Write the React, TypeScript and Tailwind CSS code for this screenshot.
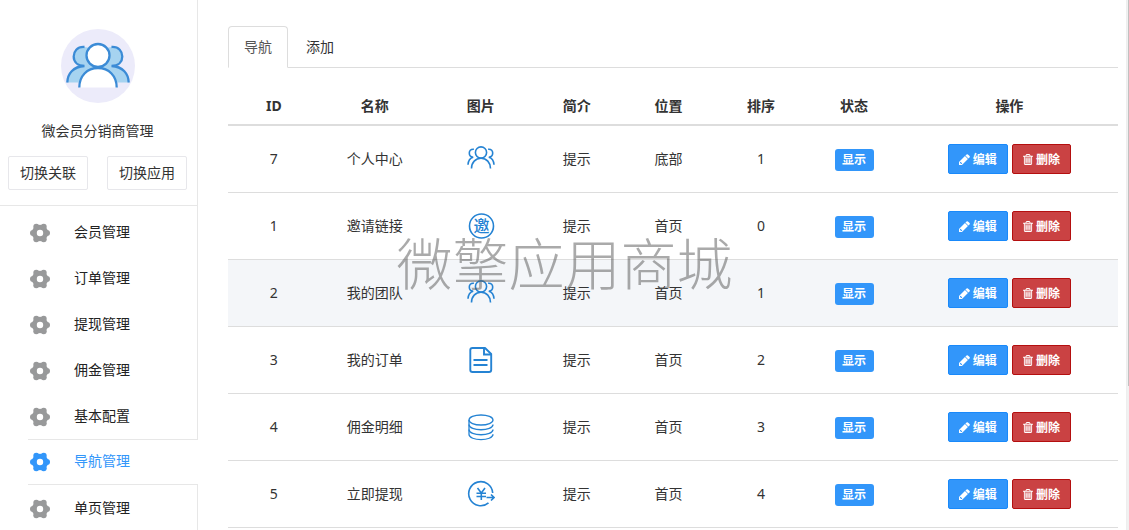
import React from "react";

type IconName = "people" | "invite" | "order" | "coins" | "withdraw";

interface Row {
  id: number;
  name: string;
  icon: IconName;
  place: string;
  sort: number;
}

const rows: Row[] = [
  { id: 7, name: "个人中心", icon: "people", place: "底部", sort: 1 },
  { id: 1, name: "邀请链接", icon: "invite", place: "首页", sort: 0 },
  { id: 2, name: "我的团队", icon: "people", place: "首页", sort: 1 },
  { id: 3, name: "我的订单", icon: "order", place: "首页", sort: 2 },
  { id: 4, name: "佣金明细", icon: "coins", place: "首页", sort: 3 },
  { id: 5, name: "立即提现", icon: "withdraw", place: "首页", sort: 4 },
];

const menu = ["会员管理", "订单管理", "提现管理", "佣金管理", "基本配置", "导航管理", "单页管理"];
const activeItem = "导航管理";

function GearIcon() {
  return (
    <svg viewBox="0 0 20 20" className="h-5 w-5 shrink-0" fill="currentColor" aria-hidden="true">
      <circle cx="10" cy="10" r="5.700" fill="none" stroke="currentColor" strokeWidth="5" />
      <circle cx="3" cy="10" r="3" />
      <circle cx="17" cy="10" r="3" />
      <circle cx="6.300" cy="3.700" r="3" />
      <circle cx="13.700" cy="3.700" r="3" />
      <circle cx="6.300" cy="16.300" r="3" />
      <circle cx="13.700" cy="16.300" r="3" />
    </svg>
  );
}

function Logo() {
  return (
    <svg viewBox="0 0 74 74" className="h-[74px] w-[74px]" aria-hidden="true">
      <circle cx="37" cy="37" r="37" fill="#ecebfa" />
      <g stroke="#3b8bd6" strokeWidth="2.3" fill="none">
        <g fill="#a6d3f0" stroke="none">
          <path d="M23 18C16 17 12.500 23 12.500 27.500C12.500 32 15 36 21 37C11 38.500 6.500 46 6 53.500H20L37 40V20Z" />
          <path d="M51 18C58 17 61.500 23 61.500 27.500C61.500 32 59 36 53 37C63 38.500 67.500 46 68 53.500H54L37 40V20Z" />
        </g>
        <path d="M23.500 18C16 17.500 12.700 22.500 12.700 27.500C12.700 32.500 16 36.800 23.500 37C12 37.500 6.500 45 6.300 53.500" />
        <path d="M50.500 18C58 17.500 61.300 22.500 61.300 27.500C61.300 32.500 58 36.800 50.500 37C62 37.500 67.500 45 67.700 53.500" />
        <path d="M18.300 58.500C18.300 47 26 39 37 39S55.700 47 55.700 58.500" fill="#fff" />
        <circle cx="37" cy="26.500" r="11.500" fill="#fff" />
      </g>
    </svg>
  );
}

function PencilIcon() {
  return (
    <svg viewBox="0 0 1536 1536" className="h-[11px] w-[11px]" fill="currentColor" aria-hidden="true">
      <path d="M363 1408l91-91-235-235-91 91v107h128v128h107zM832 288l416 416-832 832H0v-416zM1515 384q0 53-37 90l-166 166-416-416 166-165q36-38 90-38 53 0 91 38l235 234q37 39 37 91z" />
    </svg>
  );
}

function TrashIcon() {
  return (
    <svg viewBox="0 0 1408 1536" className="h-[11px] w-2.5" fill="currentColor" aria-hidden="true">
      <path fillOpacity="0.4" d="M256 384H1152V1408H256Z" />
      <path d="M512 608v576q0 14-9 23t-23 9h-64q-14 0-23-9t-9-23V608q0-14 9-23t23-9h64q14 0 23 9t9 23zM768 608v576q0 14-9 23t-23 9h-64q-14 0-23-9t-9-23V608q0-14 9-23t23-9h64q14 0 23 9t9 23zM1024 608v576q0 14-9 23t-23 9h-64q-14 0-23-9t-9-23V608q0-14 9-23t23-9h64q14 0 23 9t9 23zM1152 1332V384H256v948q0 22 7 40.500t14.500 27 10.500 8.500h832q3 0 10.500-8.500t14.500-27 7-40.500zM480 256h448l-48-117q-7-9-17-11H546q-10 2-17 11zM1408 288v64q0 14-9 23t-23 9h-96v948q0 83-47 143.500t-113 60.500H288q-66 0-113-58.500T128 1336V384H32q-14 0-23-9t-9-23v-64q0-14 9-23t23-9h309l70-167q15-37 54-63t79-26h320q40 0 79 26t54 63l70 167h309q14 0 23 9t9 23z" />
    </svg>
  );
}

function RowIcon({ name }: { name: IconName }) {
  return (
    <svg
      viewBox="0 0 28 28"
      className="mx-auto block h-7 w-7 text-[#2583d3]"
      fill="none"
      stroke="currentColor"
      strokeWidth="1.6"
      aria-hidden="true"
    >
      {name === "people" && (
        <>
          <circle cx="14" cy="7.500" r="5.600" />
          <path d="M4.500 23.500C4.500 17.500 8.500 13.300 14 13.300S23.500 17.500 23.500 23.500" />
          <path d="M6.900 4.300C3.500 4 2.300 6 2.300 8S3.500 12 6.200 12.200C3 13 1.200 16 1 19.800" />
          <path d="M21.100 4.300C24.500 4 25.700 6 25.700 8S24.500 12 21.800 12.200C25 13 26.800 16 27 19.800" />
        </>
      )}
      {name === "invite" && (
        <>
          <circle cx="14.500" cy="14" r="12" />
          <text x="14.500" y="20" fontSize="16" fontWeight="500" textAnchor="middle" fill="currentColor" stroke="none">
            邀
          </text>
        </>
      )}
      {name === "order" && (
        <g strokeWidth="1.900">
          <path d="M18 2H5.500Q3.300 2 3.300 4V24Q3.300 26 5.500 26H22Q24.200 26 24.200 24V8Z" strokeLinejoin="round" />
          <path d="M17 2V8.500H24" />
          <path d="M6.500 14H20.500M6.500 19H20.500" />
        </g>
      )}
      {name === "coins" && (
        <g strokeWidth="1.300">
          <ellipse cx="14" cy="7" rx="12" ry="5" />
          <path d="M2 7V21.500" />
          <path d="M2 11.500C2 18.500 26 18.500 26 11.500" />
          <path d="M2 16.500C2 23.500 26 23.500 26 16.500" />
          <path d="M2 21.300C2 28.300 26 28.300 26 21.300" />
        </g>
      )}
      {name === "withdraw" && (
        <>
          <path d="M25.700 13A12 12 0 1 0 21.500 22.800" />
          <path d="M10.500 8L14.300 13L18 8M14.300 13V20M9.500 13.200H19M9.500 16.500H19" />
          <path d="M19.500 17.500H27M24 14.500L27 17.500L24 20.500" strokeWidth="1.700" />
        </>
      )}
    </svg>
  );
}

function Sidebar() {
  return (
    <aside className="flex w-[198px] shrink-0 flex-col">
      <div className="border-r border-b border-[#e7e7e7] px-2 pt-[29px] pb-[15px]">
        <div className="flex flex-col items-center gap-[17px] pr-0.5">
          <Logo />
          <h1 className="leading-[22px]">微会员分销商管理</h1>
        </div>
        <div className="mt-3.5 flex justify-between pr-0.5">
          {["切换关联", "切换应用"].map((label) => (
            <button key={label} type="button" className="h-[34px] w-20 rounded-xs border border-[#e7e7eb]">
              {label}
            </button>
          ))}
        </div>
      </div>
      <nav className="flex grow flex-col">
        <div className="h-[3px] border-r border-[#e7e7e7]" />
        {menu.map((label) => {
          const active = label === activeItem;
          return (
            <div key={label} className={active ? "pl-7" : "border-r border-[#e7e7e7] pl-7"}>
              <a
                href="#"
                aria-current={active ? "page" : undefined}
                className={
                  active
                    ? "flex h-[46px] items-center gap-6 border-y border-[#e7e7e7] pb-[3px] pl-0.5 text-[#3296fa]"
                    : "flex h-[46px] items-center gap-6 pb-px pl-0.5 text-[#222]"
                }
              >
                <span className={active ? "mt-0.5" : "mt-0.5 text-[#98999a]"}>
                  <GearIcon />
                </span>
                <span>{label}</span>
              </a>
            </div>
          );
        })}
        <div className="grow border-r border-[#e7e7e7]" />
      </nav>
    </aside>
  );
}

function NavTable() {
  const heads = ["ID", "名称", "图片", "简介", "位置", "排序", "状态", "操作"];
  return (
    <table className="w-full table-fixed border-collapse text-center">
      <colgroup>
        <col className="w-[10.3%]" />
        <col className="w-[12.4%]" />
        <col className="w-[11.4%]" />
        <col className="w-[10.2%]" />
        <col className="w-[10.4%]" />
        <col className="w-[10.4%]" />
        <col className="w-[10.5%]" />
        <col />
      </colgroup>
      <thead>
        <tr className="h-[39px] border-b-2 border-[#ddd]">
          {heads.map((head) => (
            <th key={head} scope="col" className="pt-0.5 font-bold">
              {head}
            </th>
          ))}
        </tr>
      </thead>
      <tbody>
        {rows.map((row) => (
          <tr
            key={row.id}
            className={row.id === 2 ? "h-[67px] border-b border-[#ddd] bg-[#f4f6f9]" : "h-[67px] border-b border-[#ddd]"}
          >
            <td>{row.id}</td>
            <td>{row.name}</td>
            <td>
              <RowIcon name={row.icon} />
            </td>
            <td>提示</td>
            <td>{row.place}</td>
            <td>{row.sort}</td>
            <td className="pt-0.5">
              <span className="inline-block h-[22px] w-[39px] rounded-[3px] bg-[#3296fa] text-xs leading-[22px] font-bold text-white">
                显示
              </span>
            </td>
            <td>
              <div className="flex justify-center gap-1 text-xs font-bold text-white">
                <button
                  type="button"
                  className="flex h-[30px] items-center gap-[3px] rounded-xs border border-[#1989fa] bg-[#3296fa] px-2.5 pt-0.5"
                >
                  <PencilIcon />
                  编辑
                </button>
                <button
                  type="button"
                  className="flex h-[30px] items-center gap-[3px] rounded-xs border border-[#b40f0f] bg-[#ca4243] px-2.5 pt-0.5"
                >
                  <TrashIcon />
                  删除
                </button>
              </div>
            </td>
          </tr>
        ))}
      </tbody>
    </table>
  );
}

export default function App() {
  return (
    <div className="relative flex min-h-screen bg-white font-['Noto_Sans','Noto_Sans_CJK_SC',sans-serif] text-sm text-[#333]">
      <Sidebar />
      <main className="min-w-0 grow pt-[26px] pr-2 pl-[30px]">
        <div role="tablist" className="flex border-b border-[#ddd]">
          <button
            type="button"
            role="tab"
            aria-selected="true"
            className="-mb-px h-[42px] rounded-t border border-[#ddd] border-b-white bg-white px-[15px] text-[#555]"
          >
            导航
          </button>
          <button type="button" role="tab" aria-selected="false" className="h-[41px] px-[18px]">
            添加
          </button>
        </div>
        <div className="pt-[18px]">
          <NavTable />
        </div>
      </main>
      <div className="w-[3px] shrink-0 border-l border-[#eee] bg-[#f1f1f1]">
        <div className="ml-px h-[386px] bg-[#c1c1c1]" />
      </div>
      <div className="pointer-events-none absolute inset-x-0 top-[228px] text-center font-['Noto_Sans_CJK_SC',sans-serif] text-[56px] leading-[66px] font-light text-[#555]/50">
        微擎应用商城
      </div>
    </div>
  );
}
